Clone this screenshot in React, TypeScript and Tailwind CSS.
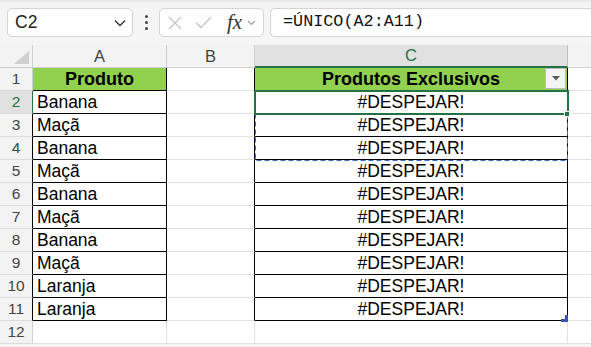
import React from 'react'

const produtos = ['Banana', 'Maçã', 'Banana', 'Maçã', 'Banana', 'Maçã', 'Banana', 'Maçã', 'Laranja', 'Laranja']

function NameBox() {
  return (
    <div className="ml-[7px] flex h-[29px] w-[126px] items-center justify-between rounded-[5px] border border-[#d4d4d4] bg-white pl-[7px] pr-[6px]">
      <span className="text-[17.5px] leading-none text-[#222]">C2</span>
      <svg width="12" height="8" viewBox="0 0 12 8" fill="none">
        <path d="M1 1.5 L6 6.5 L11 1.5" stroke="#333" strokeWidth="1.4" />
      </svg>
    </div>
  )
}

function FxBox() {
  return (
    <div className="flex h-[29px] w-[105px] items-center rounded-[5px] border border-[#d4d4d4] bg-white pl-[8px]">
      <svg width="14" height="14" viewBox="0 0 14 14" fill="none">
        <path d="M1 1 L13 13 M13 1 L1 13" stroke="#c4c4c4" strokeWidth="1.3" />
      </svg>
      <svg className="ml-[13px]" width="17" height="13" viewBox="0 0 17 13" fill="none">
        <path d="M1 6.5 L6 11.5 L16 1" stroke="#c4c4c4" strokeWidth="1.3" />
      </svg>
      <span className="ml-[15px] font-['Liberation_Serif'] text-[21px] italic leading-none text-[#333]">fx</span>
      <svg className="ml-[5px]" width="9" height="6" viewBox="0 0 9 6" fill="none">
        <path d="M1 1 L4.5 4.5 L8 1" stroke="#9a9a9a" strokeWidth="1.1" />
      </svg>
    </div>
  )
}

function Dots() {
  return (
    <div className="mx-[9px] flex w-[8px] flex-col items-center gap-[3px]">
      <span className="h-[3px] w-[3px] rounded-full bg-[#444]" />
      <span className="h-[3px] w-[3px] rounded-full bg-[#444]" />
      <span className="h-[3px] w-[3px] rounded-full bg-[#444]" />
    </div>
  )
}

function Row({ n }: { n: number }) {
  const inTable = n <= 11
  const selected = n === 2
  const a = n === 1 ? 'Produto' : inTable ? produtos[n - 2] : ''
  const c = n === 1 ? 'Produtos Exclusivos' : inTable ? '#DESPEJAR!' : ''
  const head = n === 1

  return (
    <>
      <div
        className={`flex items-center justify-center border-b border-b-[#dcdcdc] text-[15.5px] ${
          selected
            ? 'border-r border-r-[#217346] bg-[#e1e1e1] text-[#217346]'
            : inTable && n > 1
              ? 'border-r border-r-black bg-[#f3f3f3] text-[#444]'
              : 'border-r border-r-[#cfcfcf] bg-[#f3f3f3] text-[#444]'
        }`}
      >
        {n}
      </div>
      <div
        className={`flex items-center overflow-hidden whitespace-nowrap text-black ${
          inTable ? 'border-r border-b border-black' : 'border-r border-b border-[#e1e1e1] bg-white'
        } ${head ? 'justify-center bg-[#92d050] text-[18px] font-bold' : 'bg-white pl-[4px] text-[17.5px]'}`}
      >
        {a}
      </div>
      <div className={`border-b border-b-[#e1e1e1] bg-white border-r ${inTable ? 'border-r-black' : 'border-r-[#e1e1e1]'}`} />
      <div
        className={`relative flex items-center justify-center whitespace-nowrap text-black ${
          inTable ? 'border-r border-b border-black' : 'border-r border-b border-[#e1e1e1]'
        } ${head ? 'bg-[#92d050] text-[18px] font-bold' : 'bg-white text-[17.5px]'}`}
      >
        {c}
        {head && (
          <div className="absolute right-[1px] top-0 flex h-[21px] w-[21px] items-center justify-center border border-[#bdbdbd] bg-[#f4f4f4]">
            <svg width="8" height="5" viewBox="0 0 8 5">
              <path d="M0 0 L8 0 L4 4.5 Z" fill="#5a5a5a" />
            </svg>
          </div>
        )}
      </div>
      <div className="border-b border-b-[#e1e1e1] bg-white" />
    </>
  )
}

export default function App() {
  const rows = Array.from({ length: 12 }, (_, i) => i + 1)

  return (
    <div className="relative h-[347px] w-[591px] overflow-hidden bg-[#f5f5f5] font-['Liberation_Sans',Arial,sans-serif]">
      <div className="h-[3px] bg-gradient-to-b from-[#e6e6e6] to-[#f5f5f5]" />
      <div className="flex h-[42px] items-start pt-[5px]">
        <NameBox />
        <div className="flex h-[29px] items-center">
          <Dots />
        </div>
        <FxBox />
        <div className="ml-[6px] flex h-[29px] flex-1 items-center rounded-l-[5px] border border-r-0 border-[#d4d4d4] bg-white pl-[12px]">
          <span className="font-['Liberation_Mono',monospace] text-[16.8px] leading-none text-[#111]">=ÚNICO(A2:A11)</span>
        </div>
      </div>

      <div className="relative grid grid-cols-[33px_134px_88px_313px_1fr] grid-rows-[23px] auto-rows-[23px]">
        <div className="relative border-r border-b border-[#cfcfcf] bg-[#f3f3f3]">
          <svg className="absolute right-[3px] bottom-[3px]" width="15" height="13" viewBox="0 0 15 13">
            <path d="M15 0 L15 13 L0 13 Z" fill="#d0d0d0" />
          </svg>
        </div>
        <div className="flex items-center justify-center border-r border-b border-[#cfcfcf] bg-[#f3f3f3] text-[16.5px] text-[#444]">A</div>
        <div className="flex items-center justify-center border-r border-b border-[#cfcfcf] bg-[#f3f3f3] text-[16.5px] text-[#444]">B</div>
        <div className="flex items-center justify-center border-r border-r-[#bdbdbd] border-b-2 border-b-[#217346] bg-[#e1e1e1] text-[16.5px] text-[#217346]">C</div>
        <div className="border-b border-[#cfcfcf] bg-[#f3f3f3]" />

        {rows.map((n) => (
          <Row key={n} n={n} />
        ))}

        <svg className="pointer-events-none absolute left-[254px] top-[45px]" width="316" height="72" viewBox="0 0 316 72" fill="none">
          <rect x="1.5" y="0.5" width="312" height="70" stroke="#3b6fca" strokeDasharray="5 3" />
        </svg>
        <div className="pointer-events-none absolute left-[254px] top-[45px] h-[25px] w-[315px] border-2 border-[#217346]" />
        <div className="pointer-events-none absolute left-[564px] top-[66px] h-[6px] w-[6px] border border-white bg-[#217346]" />
        <svg className="pointer-events-none absolute left-[561px] top-[270px]" width="7" height="7" viewBox="0 0 7 7">
          <path d="M4 0 L7 0 L7 7 L0 7 L0 4 L4 4 Z" fill="#3a55b0" />
        </svg>
      </div>
    </div>
  )
}
